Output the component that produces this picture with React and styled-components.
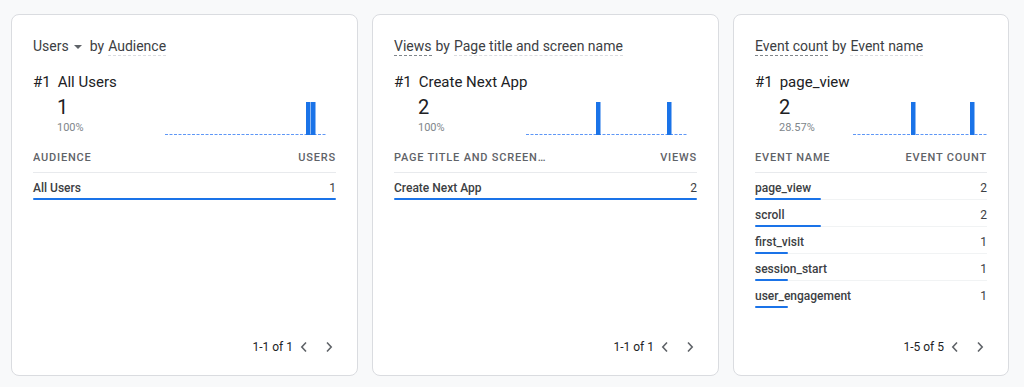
import React from "react";
import styled, { createGlobalStyle } from "styled-components";

const Global = createGlobalStyle`
  html, body { margin: 0; padding: 0; background: #f8f9fa; }
  body { font-family: Roboto, "Noto Sans", Arial, sans-serif; -webkit-font-smoothing: antialiased; }
  * { box-sizing: border-box; }
`;

const Page = styled.div`
  display: flex;
  gap: 14px;
  padding: 14px 0 0 11px;
  height: 387px;
`;

const Card = styled.section`
  width: ${(p) => p.$w}px;
  height: 362px;
  background: #fff;
  border: 1px solid #dadce0;
  border-radius: 8px;
  padding: 23px 21px 16px;
  display: flex;
  flex-direction: column;
`;

const Title = styled.div`
  font-size: 14px;
  line-height: 20px;
  color: #3c4043;
  display: flex;
  align-items: center;
  white-space: nowrap;
`;

const Metric = styled.span`
  border-bottom: ${(p) => (p.$dashed ? "1px dashed #80868b" : "1px solid transparent")};
  line-height: 17px;
`;

const Dim = styled.span`
  border-bottom: 1px dashed #dadce0;
  line-height: 17px;
`;

const By = styled.span`
  margin: 0 4px;
  line-height: 17px;
  border-bottom: 1px solid transparent;
`;

const Caret = styled.span`
  display: inline-block;
  width: 0;
  height: 0;
  margin: 0 4px 0 5px;
  border-left: 4.5px solid transparent;
  border-right: 4.5px solid transparent;
  border-top: 4.5px solid #5f6368;
`;

const Top = styled.div`
  margin-top: 14px;
  font-size: 15px;
  line-height: 24px;
  color: #202124;
  display: flex;
  gap: 7px;
  white-space: nowrap;
`;

const StatRow = styled.div`
  display: flex;
  align-items: flex-end;
`;

const StatBlock = styled.div`
  padding-left: 24px;
  display: flex;
  flex-direction: column;
`;

const Big = styled.div`
  font-size: 20px;
  line-height: 27px;
  color: #202124;
`;

const Pct = styled.div`
  font-size: 11px;
  line-height: 14px;
  color: #80868b;
`;

const Spark = styled.svg`
  display: block;
  margin-left: auto;
  margin-right: ${(p) => p.$mr}px;
`;

const Table = styled.div`
  margin-top: 15px;
  display: flex;
  flex-direction: column;
`;

const Head = styled.div`
  display: flex;
  justify-content: space-between;
  font-size: 11px;
  line-height: 16px;
  font-weight: 500;
  letter-spacing: 0.8px;
  text-transform: uppercase;
  color: #5f6368;
  padding-bottom: 6px;
  border-bottom: 1px solid #e8eaed;
  white-space: nowrap;
`;

const HeadLeft = styled.span`
  max-width: 50%;
  overflow: hidden;
  text-overflow: ellipsis;
`;

const Row = styled.div`
  position: relative;
  height: 27px;
  padding-top: 3px;
  display: flex;
  align-items: center;
  justify-content: space-between;
  font-size: 12px;
  color: #202124;
  border-bottom: 1px solid #f1f3f4;
  &:last-child { border-bottom-color: transparent; }
`;

const Name = styled.span`
  font-weight: 500;
  color: #3c4043;
`;

const Val = styled.span`
  color: #3c4043;
`;

const Bar = styled.div`
  position: absolute;
  left: 0;
  bottom: -1px;
  height: 2px;
  background: #1a73e8;
  border-radius: 1px;
`;

const Footer = styled.div`
  margin-top: auto;
  display: flex;
  align-items: center;
  justify-content: flex-end;
  height: 24px;
  margin-right: -3px;
  font-size: 12px;
  color: #202124;
`;

const Nav = styled.button`
  width: 20px;
  height: 24px;
  margin-left: ${(p) => p.$ml}px;
  border: 0;
  padding: 0;
  background: none;
  display: flex;
  align-items: center;
  justify-content: center;
  cursor: pointer;
`;

function Chevron({ dir }) {
  return (
    <svg width="8" height="12" viewBox="0 0 8 12">
      <polyline
        points={dir === "left" ? "6,1.5 1.8,6 6,10.5" : "2,1.5 6.2,6 2,10.5"}
        fill="none"
        stroke="#5f6368"
        strokeWidth="1.6"
      />
    </svg>
  );
}

function Sparkline({ width, bars, mr }) {
  return (
    <Spark $mr={mr} width={width} height="34" viewBox={`0 0 ${width} 34`}>
      <line x1="0" y1="33.5" x2={width} y2="33.5" stroke="#5e97f6" strokeWidth="1" strokeDasharray="3 1.5" />
      {bars.map((x) => (
        <rect key={x} x={x} y="1" width="4.5" height="33" fill="#1a73e8" />
      ))}
    </Spark>
  );
}

const cards = [
  {
    w: 347,
    title: (
      <Title>
        <Metric>Users</Metric>
        <Caret />
        <By>by</By>
        <Dim>Audience</Dim>
      </Title>
    ),
    top: "All Users",
    big: "1",
    pct: "100%",
    spark: { width: 162, bars: [141, 146], mr: 9 },
    cols: ["Audience", "Users"],
    rows: [["All Users", 1, 100]],
    page: "1-1 of 1",
  },
  {
    w: 347,
    title: (
      <Title>
        <Metric $dashed>Views</Metric>
        <By>by</By>
        <Dim>Page title and screen name</Dim>
      </Title>
    ),
    top: "Create Next App",
    big: "2",
    pct: "100%",
    spark: { width: 162, bars: [70, 141], mr: 9 },
    cols: ["Page title and screen name", "Views"],
    rows: [["Create Next App", 2, 100]],
    page: "1-1 of 1",
  },
  {
    w: 276,
    title: (
      <Title>
        <Metric $dashed>Event count</Metric>
        <By>by</By>
        <Dim>Event name</Dim>
      </Title>
    ),
    top: "page_view",
    big: "2",
    pct: "28.57%",
    spark: { width: 134, bars: [58, 117], mr: 0 },
    cols: ["Event name", "Event count"],
    rows: [
      ["page_view", 2, 28.57],
      ["scroll", 2, 28.57],
      ["first_visit", 1, 14.29],
      ["session_start", 1, 14.29],
      ["user_engagement", 1, 14.29],
    ],
    page: "1-5 of 5",
  },
];

export default function App() {
  return (
    <>
      <Global />
      <Page>
        {cards.map((c, i) => (
          <Card key={i} $w={c.w}>
            {c.title}
            <Top>
              <span>#1</span>
              <span>{c.top}</span>
            </Top>
            <StatRow>
              <StatBlock>
                <Big>{c.big}</Big>
                <Pct>{c.pct}</Pct>
              </StatBlock>
              <Sparkline {...c.spark} />
            </StatRow>
            <Table>
              <Head>
                <HeadLeft>{c.cols[0]}</HeadLeft>
                <span>{c.cols[1]}</span>
              </Head>
              {c.rows.map(([n, v, p]) => (
                <Row key={n}>
                  <Name>{n}</Name>
                  <Val>{v}</Val>
                  <Bar style={{ width: `${p}%` }} />
                </Row>
              ))}
            </Table>
            <Footer>
              <span>{c.page}</span>
              <Nav $ml={1} aria-label="Previous"><Chevron dir="left" /></Nav>
              <Nav $ml={5} aria-label="Next"><Chevron dir="right" /></Nav>
            </Footer>
          </Card>
        ))}
      </Page>
    </>
  );
}
